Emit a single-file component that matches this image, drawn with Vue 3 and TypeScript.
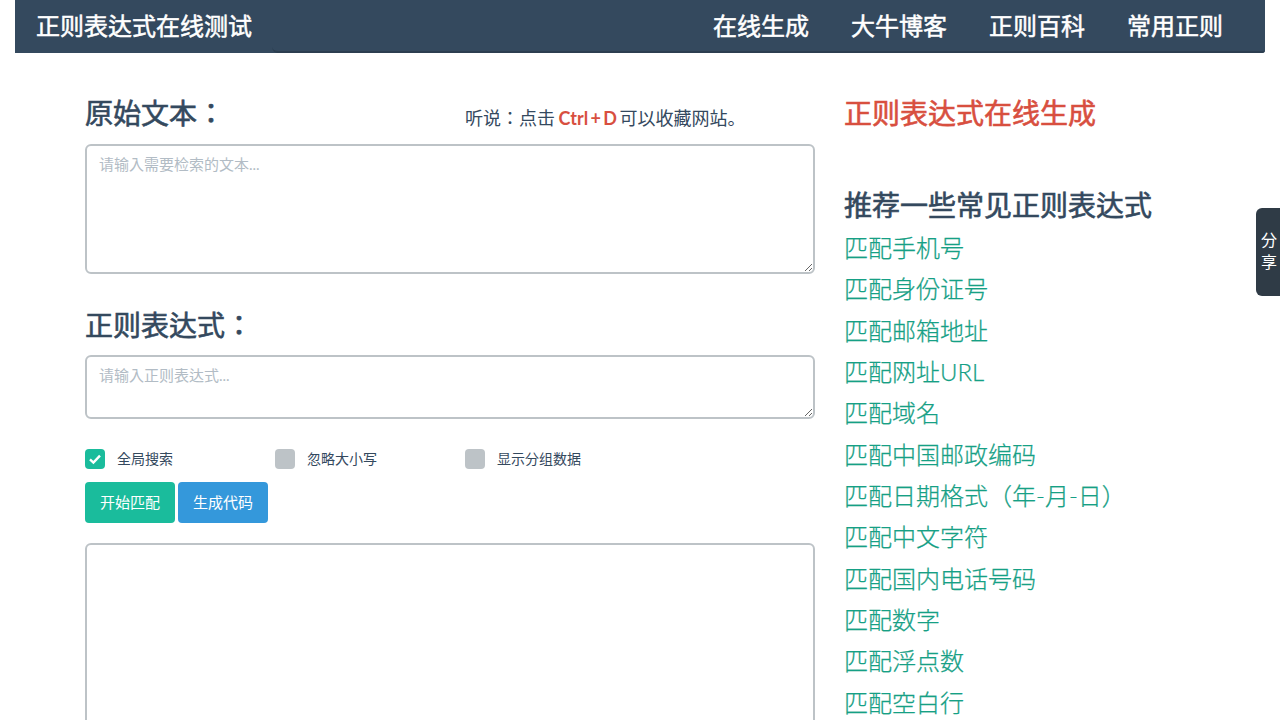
<script setup lang="ts">
const navItems: string[] = ['在线生成', '大牛博客', '正则百科', '常用正则']
const options = [
  { label: '全局搜索', checked: true },
  { label: '忽略大小写', checked: false },
  { label: '显示分组数据', checked: false },
]
const links: string[] = [
  '匹配手机号', '匹配身份证号', '匹配邮箱地址', '匹配网址URL', '匹配域名', '匹配中国邮政编码',
  '匹配日期格式（年-月-日）', '匹配中文字符', '匹配国内电话号码', '匹配数字', '匹配浮点数', '匹配空白行',
]
</script>

<template>
  <div class="page">
    <nav class="navbar">
      <a class="brand">正则表达式在线测试</a>
      <div class="collapse">
        <a v-for="item in navItems" :key="item" class="nav-link">{{ item }}</a>
      </div>
    </nav>
    <main class="content">
      <section class="left">
        <div class="head-row">
          <h2 class="title">原始文本：</h2>
          <p class="tip">听说：点击 <strong>Ctrl + D</strong> 可以收藏网站。</p>
        </div>
        <textarea class="box box-source" placeholder="请输入需要检索的文本..."></textarea>
        <h2 class="title title-regex">正则表达式：</h2>
        <textarea class="box box-regex" placeholder="请输入正则表达式..."></textarea>
        <div class="options">
          <label v-for="opt in options" :key="opt.label" class="option">
            <span class="check" :class="{ on: opt.checked }">
              <svg v-if="opt.checked" width="14" height="12" viewBox="0 0 14 12">
                <path d="M2 6.4 5.4 9.6 12 2.6" fill="none" stroke="#fff" stroke-width="2.4" />
              </svg>
            </span>
            <span class="opt-label">{{ opt.label }}</span>
          </label>
        </div>
        <div class="buttons">
          <button class="btn green">开始匹配</button>
          <button class="btn blue">生成代码</button>
        </div>
        <textarea class="box box-result"></textarea>
      </section>
      <aside class="right">
        <h2 class="gen-title">正则表达式在线生成</h2>
        <h3 class="rec-title">推荐一些常见正则表达式</h3>
        <a v-for="link in links" :key="link" class="link">{{ link }}</a>
      </aside>
    </main>
    <div class="share">分<br />享</div>
  </div>
</template>

<style>
html, body { margin: 0; height: 720px; overflow: hidden; background: #fff; }
</style>

<style scoped>
.page {
  height: 720px;
  overflow: hidden;
  font-family: Lato, "Noto Sans CJK JP", sans-serif;
  color: #34495e;
}
.navbar {
  margin: 0 15px;
  height: 53px;
  display: flex;
  background: #34495e;
  border-radius: 0 0 3px 0;
  color: #fff;
}
.brand {
  width: 257px;
  box-sizing: border-box;
  padding-left: 21px;
  font-size: 24px;
  font-weight: 400;
  -webkit-text-stroke: 0.5px currentColor;
  line-height: 52px;
}
.collapse {
  flex: 1;
  display: flex;
  justify-content: flex-end;
  padding-right: 42px;
  border-bottom: 2px solid #2c3e50;
  border-radius: 0 0 3px 6px;
}
.nav-link {
  margin-left: 42px;
  font-size: 24px;
  font-weight: 400;
  -webkit-text-stroke: 0.5px currentColor;
  line-height: 52px;
}
.content {
  display: flex;
  gap: 29px;
  padding: 0 70px 0 85px;
}
.left { width: 730px; flex: none; }
.head-row { display: flex; height: 91px; }
.title {
  margin: 0;
  font-size: 28px;
  font-weight: 400;
  -webkit-text-stroke: 0.6px currentColor;
  line-height: 31px;
  padding-top: 45px;
  width: 380px;
}
.title-regex { padding-top: 36px; height: 45px; width: auto; }
.tip { margin: 0; padding-top: 50px; font-size: 18px; line-height: 31px; }
.tip strong { color: #d84f3f; font-weight: 700; word-spacing: -2px; margin: 0 -2px 0 -1px; }
.box {
  display: block;
  width: 100%;
  box-sizing: border-box;
  border: 2px solid #bdc3c7;
  border-radius: 6px;
  padding: 8px 12px;
  font: 15px/1.42857 Lato, "Noto Sans CJK JP", sans-serif;
  color: #34495e;
  background: #fff;
  outline: none;
}
.box::placeholder { color: #b2bcc5; opacity: 1; }
.box-source { height: 130px; }
.box-regex { height: 64px; }
.box-result { height: 240px; margin-top: 20px; }
.options { display: flex; margin-top: 30px; }
.option {
  width: 190px;
  height: 20px;
  display: flex;
  align-items: center;
  gap: 12px;
  font-size: 14px;
}
.opt-label { padding-bottom: 2px; }
.check {
  width: 20px;
  height: 20px;
  border-radius: 4px;
  background: #bdc3c7;
  display: flex;
  align-items: center;
  justify-content: center;
}
.check.on { background: #1abc9c; }
.buttons { display: flex; gap: 3px; margin-top: 13px; }
.btn {
  width: 90px;
  height: 41px;
  padding: 0 0 2px;
  border: none;
  border-radius: 4px;
  color: #fff;
  font: 15px Lato, "Noto Sans CJK JP", sans-serif;
}
.green { background: #1abc9c; }
.blue { background: #3498db; }
.right { flex: 1; min-width: 0; }
.gen-title {
  margin: 0;
  padding-top: 42px;
  font-size: 28px;
  font-weight: 400;
  -webkit-text-stroke: 0.6px currentColor;
  line-height: 36px;
  color: #d84f3f;
}
.rec-title {
  margin: 0 0 4px;
  padding-top: 56px;
  font-size: 28px;
  font-weight: 400;
  -webkit-text-stroke: 0.6px currentColor;
  line-height: 36px;
}
.link {
  display: block;
  font-size: 24px;
  font-weight: 300;
  -webkit-text-stroke: 0.25px currentColor;
  line-height: 41.33px;
  color: #16a085;
}
.share {
  position: fixed;
  right: 0;
  top: 208px;
  width: 24px;
  height: 88px;
  box-sizing: border-box;
  padding: 21px 0 0 2px;
  border-radius: 6px 0 0 6px;
  background: #2f3b46;
  color: #fff;
  font-size: 16px;
  line-height: 22px;
  text-align: center;
}
</style>
